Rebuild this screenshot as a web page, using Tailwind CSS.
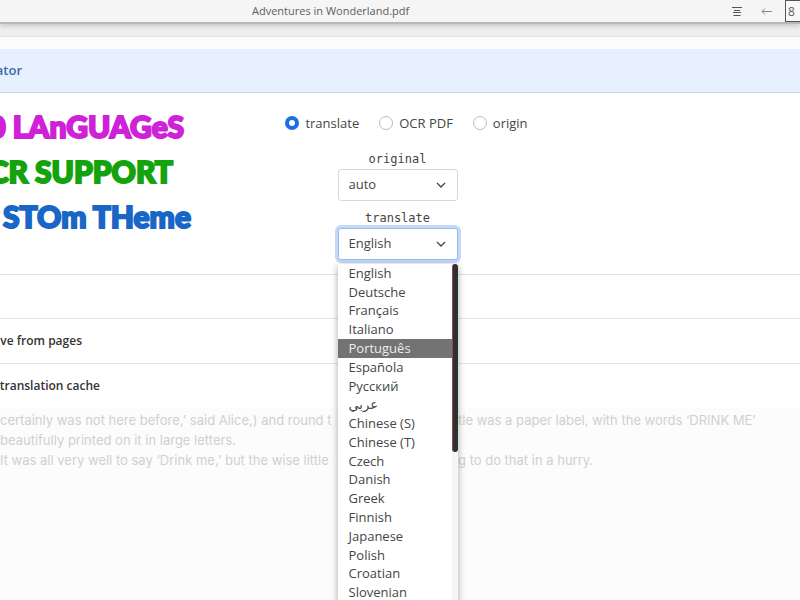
<!DOCTYPE html>
<html lang="en">
<head>
  <meta charset="UTF-8" />
  <meta name="viewport" content="width=device-width, initial-scale=1.0"/>
  <title>Adventures in Wonderland.pdf</title>
  <script src="https://cdn.jsdelivr.net/npm/@tailwindcss/browser@4"></script>
</head>
<body class="h-screen overflow-hidden flex flex-col bg-[#efefef] font-['Open_Sans','Noto_Sans',sans-serif] text-[13px] text-[#454545]">

  <!-- Title bar -->
  <header class="relative z-10 h-6 shrink-0 flex justify-between items-center bg-[#f5f5f5] border-b-2 border-[#b8b8b8] shadow-[0_2px_5px_rgba(0,0,0,0.18)]">
    <h1 class="pl-[252px] text-[11px] leading-5 text-[#606060]">Adventures in Wonderland.pdf</h1>
    <div class="flex items-center">
      <button aria-label="Outline" class="mr-[18px]">
        <svg class="w-3 h-3" viewBox="0 0 12 12" fill="none" stroke="#555" stroke-width="1"><path d="M1 2.500h10M3 5.500h6M2 7.500h8M2.500 10.500h7"/></svg>
      </button>
      <button aria-label="Back" class="mr-3">
        <svg class="w-3 h-3" viewBox="0 0 12 12" fill="none" stroke="#888" stroke-width="1"><path d="M11 6.500H1M4 3.500L1 6.500l3 3"/></svg>
      </button>
      <input aria-label="Page" value="8" class="w-[15px] h-[22px] pl-[2px] text-xs bg-[#f8f8f8] border border-r-0 border-[#555] text-[#606060]" />
    </div>
  </header>

  <!-- Settings -->
  <main class="mt-3 flex-1 flex flex-col bg-[#fcfcfc] border-t border-[#e4e4e4]">
    <div class="mt-3 h-11 shrink-0 flex items-center bg-[#e7f0fe] border-b border-[#cdd5e0] overflow-hidden">
      <h2 class="w-[22px] flex justify-end font-semibold text-[#3b69ab]">ator</h2>
    </div>

    <section class="h-[182px] shrink-0 flex bg-white border-b border-[#e2e2e2]">
      <div class="w-[192px] pt-[11px] overflow-hidden flex flex-col font-['Lato',sans-serif] font-black text-[30px] leading-[45px] whitespace-nowrap [-webkit-text-stroke:2px]">
        <p class="w-[184px] flex justify-end text-[#cf22d8]">0 LAnGUAGeS</p>
        <p class="w-[173px] flex justify-end text-[#14a30c]">CR SUPPORT</p>
        <p class="w-[191px] flex justify-end text-[#1866c6]">STOm THeme</p>
      </div>

      <form class="flex-1 flex flex-col items-center pt-5">
        <div class="pl-[18px] flex items-center gap-5 leading-5">
          <label class="flex items-center gap-[6px]"><input type="radio" name="mode" checked class="appearance-none size-[14px] rounded-full border border-[#bcbcbc] checked:border-4 checked:border-[#1b6fe0] bg-white" />translate</label>
          <label class="flex items-center gap-[6px]"><input type="radio" name="mode" class="appearance-none size-[14px] rounded-full border border-[#bcbcbc] bg-white" />OCR PDF</label>
          <label class="flex items-center gap-[6px]"><input type="radio" name="mode" class="appearance-none size-[14px] rounded-full border border-[#bcbcbc] bg-white" />origin</label>
        </div>

        <label for="source" class="mt-4 leading-5 font-['DejaVu_Sans_Mono',monospace] text-xs">original</label>
        <div class="relative w-[120px]">
          <select id="source" class="appearance-none w-full h-8 px-[10px] rounded-[3px] border border-[#d8d8d8] bg-white">
            <option>auto</option>
          </select>
          <svg class="absolute right-3 top-[11px] w-[10px] h-[10px] pointer-events-none" viewBox="0 0 10 10" fill="none" stroke="#444" stroke-width="1.300"><path d="M1 3l4 4 4-4"/></svg>
        </div>

        <label for="target" class="mt-[7px] leading-5 font-['DejaVu_Sans_Mono',monospace] text-xs">translate</label>
        <div class="relative w-[120px]">
          <select id="target" class="appearance-none w-full h-8 px-[10px] rounded-[3px] border border-[#93bdf0] bg-white ring-3 ring-[#c4daf8]">
            <option>English</option>
          </select>
          <svg class="absolute right-3 top-[11px] w-[10px] h-[10px] pointer-events-none" viewBox="0 0 10 10" fill="none" stroke="#444" stroke-width="1.300"><path d="M1 3l4 4 4-4"/></svg>

          <!-- Open language list -->
          <div class="absolute z-20 top-9 left-0 w-full bg-white shadow-[0_2px_7px_rgba(0,0,0,0.35)]">
            <ul role="listbox" aria-label="Languages" class="h-[338px] grid auto-rows-fr *:pl-[11px] *:flex *:items-center leading-none">
              <li role="option">English</li>
              <li role="option">Deutsche</li>
              <li role="option">Français</li>
              <li role="option">Italiano</li>
              <li role="option" aria-selected="true" class="mr-[5px] bg-[#737373] text-[#ececec]">Português</li>
              <li role="option">Española</li>
              <li role="option">Русский</li>
              <li role="option" class="font-['DejaVu_Sans',sans-serif]">عربي</li>
              <li role="option">Chinese (S)</li>
              <li role="option">Chinese (T)</li>
              <li role="option">Czech</li>
              <li role="option">Danish</li>
              <li role="option">Greek</li>
              <li role="option">Finnish</li>
              <li role="option">Japanese</li>
              <li role="option">Polish</li>
              <li role="option">Croatian</li>
              <li role="option">Slovenian</li>
            </ul>
            <div class="absolute right-0 top-0 w-[6px] h-full bg-[#f6f6f6]">
              <div class="h-[188px] rounded-[3px] bg-[#303030] border-l border-[#8d4a4a]"></div>
            </div>
          </div>
        </div>
      </form>

      <div class="w-[197px]"></div>
    </section>

    <div class="h-11 shrink-0 bg-white border-b border-[#e2e2e2]"></div>
    <div class="h-[45px] shrink-0 flex items-center bg-white border-b border-[#e2e2e2] overflow-hidden">
      <h3 class="w-[82px] flex justify-end whitespace-nowrap text-xs font-semibold text-[#333]">ve from pages</h3>
    </div>
    <div class="h-11 shrink-0 flex items-center bg-white overflow-hidden">
      <h3 class="w-[100px] flex justify-end whitespace-nowrap text-xs font-semibold text-[#333]">translation cache</h3>
    </div>

    <!-- Page text on both sides of the open list -->
    <article class="pt-[2px] whitespace-nowrap font-['Comic_Sans_MS','Inter',sans-serif] text-[13px] leading-5 text-[#d0d0d0]">
      <p class="flex gap-[120px]"><span class="w-[338px] shrink-0">certainly was not here before,’ said Alice,) and round t</span><span>tle was a paper label, with the words ‘DRINK ME’</span></p>
      <p>beautifully printed on it in large letters.</p>
      <p class="flex gap-[120px]"><span class="w-[338px] shrink-0">It was all very well to say ‘Drink me,’ but the wise little</span><span>g to do that in a hurry.</span></p>
    </article>
  </main>

</body>
</html>
